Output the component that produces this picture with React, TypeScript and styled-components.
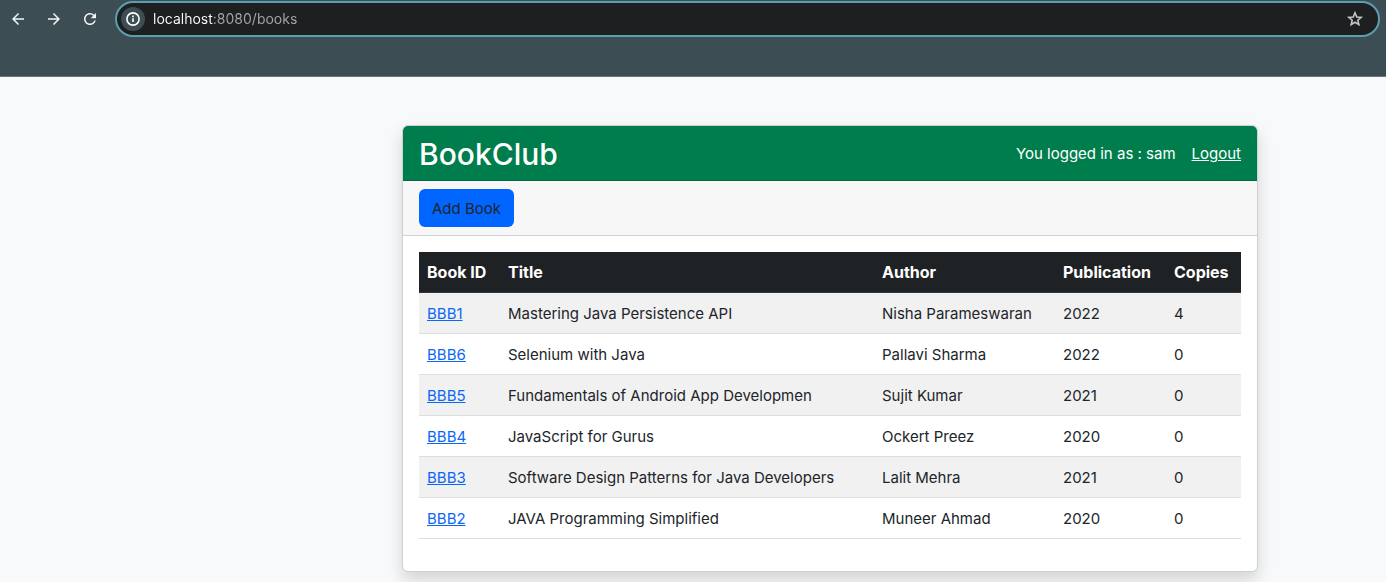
import React from "react";
import styled, { createGlobalStyle } from "styled-components";
import { MdArrowBack, MdArrowForward, MdRefresh } from "react-icons/md";

const GlobalStyle = createGlobalStyle`
  *, *::before, *::after { box-sizing: border-box; }
  body {
    margin: 0;
    background: #f8f9fa;
    color: #212529;
    font-family: Inter, "Liberation Sans", sans-serif;
    font-size: 15px;
    line-height: 24px;
  }
`;

const Page = styled.div`
  display: flex;
  flex-direction: column;
  min-height: 100vh;
`;

const BrowserBar = styled.header`
  background: #3c4d54;
  border-bottom: 1px solid #69767b;
  padding: 1px 6px 39px 9px;
  display: flex;
  align-items: center;
`;

const NavButtons = styled.div`
  display: flex;
  gap: 18px;
  margin-right: 16px;
`;

const IconButton = styled.button`
  display: flex;
  align-items: center;
  justify-content: center;
  width: 18px;
  height: 24px;
  padding: 0;
  border: 0;
  background: none;
  color: #c4c6c8;
  flex: none;
`;

const NavButton = styled(IconButton)`
  color: #f1f4f5;
`;

const AddressBar = styled.form`
  flex: 1;
  display: flex;
  align-items: center;
  height: 36px;
  padding: 0 14px 0 4px;
  border: 2px solid #5a9fb0;
  border-radius: 18px;
  background: #1e1f21;
`;

const SiteInfo = styled(IconButton)`
  width: 24px;
  border-radius: 50%;
  background: #3c4d54;
  color: #ffffff;
`;

const AddressInput = styled.input`
  flex: 1;
  min-width: 0;
  height: 24px;
  margin-left: 8px;
  padding: 0;
  border: 0;
  outline: 0;
  font: 14px/24px Inter, sans-serif;
  background: linear-gradient(90deg, #ffffff 61px, #a6a8ab 61px);
  background-clip: text;
  -webkit-background-clip: text;
  -webkit-text-fill-color: transparent;
`;

const Content = styled.main`
  display: grid;
  grid-template-columns: 402fr 856fr 128fr;
  padding: 48px 0 10px;
`;

const Card = styled.section`
  grid-column: 2;
  background: #ffffff;
  border: 1px solid #cfd0d1;
  border-radius: 6px;
  box-shadow: 0 8px 16px rgba(0, 0, 0, 0.15);
`;

const CardHeader = styled.div`
  display: flex;
  align-items: center;
  justify-content: space-between;
  height: 55px;
  padding: 1px 16px 0;
  background: #007d4c;
  border-bottom: 1px solid #00693f;
  border-radius: 5px 5px 0 0;
  color: #ffffff;
`;

const Brand = styled.h1`
  margin: 0;
  font-size: 30px;
  line-height: 38px;
  font-weight: 500;
`;

const Session = styled.div`
  display: flex;
  gap: 16px;
`;

const LogoutLink = styled.a`
  color: inherit;
  text-decoration: underline;
`;

const Toolbar = styled.div`
  display: flex;
  padding: 8px 16px;
  background: #f7f7f7;
  border-bottom: 1px solid #cfd0d1;
`;

const PrimaryButton = styled.button`
  height: 38px;
  padding: 1px 13px 0;
  border: 0;
  border-radius: 6px;
  background: #0066ff;
  color: #212529;
  font: inherit;
`;

const CardBody = styled.div`
  padding: 16px 16px 32px;
`;

const BookTable = styled.table`
  width: 100%;
  table-layout: fixed;
  border-collapse: separate;
  border-spacing: 0;
`;

const Column = styled.col<{ $width?: number }>`
  width: ${(p) => (p.$width ? `${p.$width}px` : "auto")};
`;

const HeadCell = styled.th`
  padding: 8px;
  text-align: left;
  font-size: 16px;
  font-weight: 700;
  white-space: nowrap;
  color: #ffffff;
  background: #1f2225;
  border-bottom: 1px solid #34373b;
`;

const BookRow = styled.tr`
  &:nth-child(odd) { background: #f1f1f1; }
`;

const Cell = styled.td`
  padding: 9px 8px 7px;
  white-space: nowrap;
  border-bottom: 1px solid #dcdedf;
`;

const BookLink = styled.a`
  color: #0b67f6;
  text-decoration: underline;
`;

function InfoIcon() {
  return (
    <svg width="16" height="16" viewBox="0 0 16 16" fill="none" aria-hidden="true">
      <circle cx="8" cy="8" r="6.1" stroke="currentColor" strokeWidth="1.6" />
      <path d="M8 7.3v3.8M8 4.6v1.6" stroke="currentColor" strokeWidth="1.6" />
    </svg>
  );
}

function StarIcon() {
  return (
    <svg width="18" height="18" viewBox="0 0 18 18" fill="none" aria-hidden="true">
      <path
        d="M9 2.8l1.75 4.15 4.45.38-3.38 2.93 1.02 4.35L9 12.3l-3.84 2.31 1.02-4.35L2.8 7.33l4.45-.38z"
        stroke="currentColor"
        strokeWidth="1.6"
      />
    </svg>
  );
}

const books = [
  { id: "BBB1", title: "Mastering Java Persistence API", author: "Nisha Parameswaran", year: 2022, copies: 4 },
  { id: "BBB6", title: "Selenium with Java", author: "Pallavi Sharma", year: 2022, copies: 0 },
  { id: "BBB5", title: "Fundamentals of Android App Developmen", author: "Sujit Kumar", year: 2021, copies: 0 },
  { id: "BBB4", title: "JavaScript for Gurus", author: "Ockert Preez", year: 2020, copies: 0 },
  { id: "BBB3", title: "Software Design Patterns for Java Developers", author: "Lalit Mehra", year: 2021, copies: 0 },
  { id: "BBB2", title: "JAVA Programming Simplified", author: "Muneer Ahmad", year: 2020, copies: 0 },
];

export default function App() {
  return (
    <Page>
      <GlobalStyle />
      <BrowserBar>
        <NavButtons>
          <NavButton aria-label="Back"><MdArrowBack size={18} /></NavButton>
          <NavButton aria-label="Forward"><MdArrowForward size={18} /></NavButton>
          <NavButton aria-label="Reload"><MdRefresh size={18} /></NavButton>
        </NavButtons>
        <AddressBar onSubmit={(e) => e.preventDefault()}>
          <SiteInfo type="button" aria-label="Site information"><InfoIcon /></SiteInfo>
          <AddressInput type="text" aria-label="Address" defaultValue="localhost:8080/books" />
          <IconButton type="button" aria-label="Bookmark"><StarIcon /></IconButton>
        </AddressBar>
      </BrowserBar>
      <Content>
        <Card>
          <CardHeader>
            <Brand>BookClub</Brand>
            <Session>
              <span>You logged in as : sam</span>
              <LogoutLink href="#logout">Logout</LogoutLink>
            </Session>
          </CardHeader>
          <Toolbar>
            <PrimaryButton type="button">Add Book</PrimaryButton>
          </Toolbar>
          <CardBody>
            <BookTable>
              <colgroup>
                <Column $width={81} />
                <Column />
                <Column $width={181} />
                <Column $width={111} />
                <Column $width={75} />
              </colgroup>
              <thead>
                <tr>
                  <HeadCell scope="col">Book ID</HeadCell>
                  <HeadCell scope="col">Title</HeadCell>
                  <HeadCell scope="col">Author</HeadCell>
                  <HeadCell scope="col">Publication</HeadCell>
                  <HeadCell scope="col">Copies</HeadCell>
                </tr>
              </thead>
              <tbody>
                {books.map((book) => (
                  <BookRow key={book.id}>
                    <Cell><BookLink href={`#${book.id}`}>{book.id}</BookLink></Cell>
                    <Cell>{book.title}</Cell>
                    <Cell>{book.author}</Cell>
                    <Cell>{book.year}</Cell>
                    <Cell>{book.copies}</Cell>
                  </BookRow>
                ))}
              </tbody>
            </BookTable>
          </CardBody>
        </Card>
      </Content>
    </Page>
  );
}
